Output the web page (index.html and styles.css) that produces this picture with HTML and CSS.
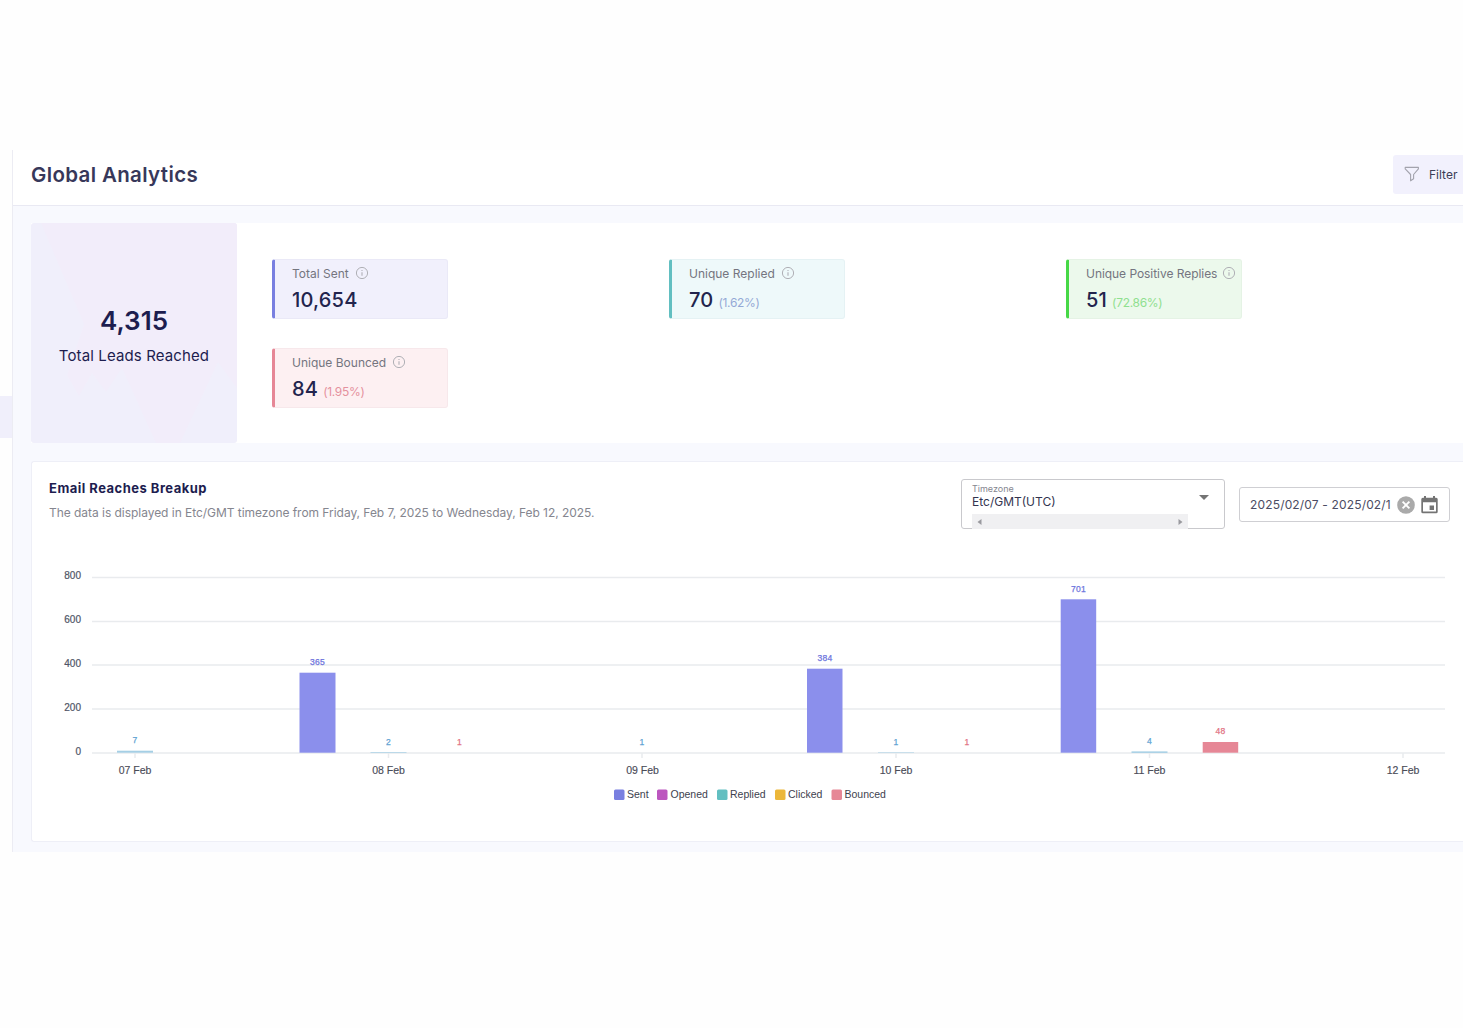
FILE: index.html
```html
<!DOCTYPE html>
<html lang="en">
<head>
  <meta charset="UTF-8">
  <title>Global Analytics</title>
  <link rel="stylesheet" href="styles.css">
</head>
<body>

  <svg class="sprite" width="0" height="0">
    <symbol id="info" viewBox="0 0 14 14">
      <circle cx="7" cy="7" r="5.6" fill="none" stroke="currentColor" stroke-width="1"/>
      <path d="M7 6.3v3.5M7 4v1" fill="none" stroke="currentColor" stroke-width="1.1"/>
    </symbol>
  </svg>

  <div class="app">
    <aside class="sidebar">
      <div class="sidebar-active"></div>
    </aside>

    <main>
      <header>
        <h1>Global Analytics</h1>
        <button type="button" class="filter">
          <svg width="16" height="16" viewBox="0 0 16 16" fill="none" stroke="#a3a3ad" stroke-width="1.1" stroke-linejoin="round">
            <path d="M1.2 1.4h13.2v1.5L9.6 8.5v4.3l-3 2V8.5L1.2 2.9z"/>
          </svg>
          <span>Filter</span>
        </button>
      </header>

      <section class="summary">
        <div class="leads">
          <svg class="leads-bg" viewBox="0 0 206 220" preserveAspectRatio="none">
            <path fill="#f2edfa" d="M10 0H206V165L187 139L149 220H125L91 145L75 169L61 150L48 173L36 152L53 101Z"/>
          </svg>
          <strong>4,315</strong>
          <span>Total Leads Reached</span>
        </div>

        <div class="stats">
          <div class="stat sent">
            <div class="stat-label"><span>Total Sent</span><svg class="info"><use href="#info"/></svg></div>
            <div class="stat-value"><b>10,654</b></div>
          </div>
          <div class="stat replied">
            <div class="stat-label"><span>Unique Replied</span><svg class="info"><use href="#info"/></svg></div>
            <div class="stat-value"><b>70</b><small>(1.62%)</small></div>
          </div>
          <div class="stat positive">
            <div class="stat-label"><span>Unique Positive Replies</span><svg class="info"><use href="#info"/></svg></div>
            <div class="stat-value"><b>51</b><small>(72.86%)</small></div>
          </div>
          <div class="stat bounced">
            <div class="stat-label"><span>Unique Bounced</span><svg class="info"><use href="#info"/></svg></div>
            <div class="stat-value"><b>84</b><small>(1.95%)</small></div>
          </div>
        </div>
      </section>

      <section class="breakup">
        <div class="breakup-head">
          <div class="breakup-title">
            <h2>Email Reaches Breakup</h2>
            <p>The data is displayed in Etc/GMT timezone from Friday, Feb 7, 2025 to Wednesday, Feb 12, 2025.</p>
          </div>

          <div class="timezone">
            <div class="timezone-field">
              <label>Timezone</label>
              <span class="timezone-value">Etc/GMT(UTC)</span>
              <div class="scrollbar">
                <svg width="5" height="6" viewBox="0 0 5 6"><path d="M4.5 0v6L.5 3z"/></svg>
                <svg width="5" height="6" viewBox="0 0 5 6"><path d="M.5 0v6l4-3z"/></svg>
              </div>
            </div>
            <svg class="caret" width="10" height="5" viewBox="0 0 10 5"><path d="M0 0h10L5 5z" fill="#747474"/></svg>
          </div>

          <div class="dates">
            <span class="dates-value">2025/02/07 - 2025/02/12</span>
            <svg width="18" height="18" viewBox="0 0 18 18">
              <circle cx="9" cy="9" r="8.8" fill="#aaaaaa"/>
              <path d="M5.6 5.6l6.8 6.8M12.4 5.6l-6.8 6.8" stroke="#fff" stroke-width="1.9"/>
            </svg>
            <svg width="17" height="18" viewBox="0 0 17 18">
              <path fill="#747474" fill-rule="evenodd" d="M3 0h2v1.8h7V0h2v1.8h1.2a1.5 1.5 0 0 1 1.5 1.5v12.4a1.5 1.5 0 0 1-1.5 1.5H1.8a1.5 1.5 0 0 1-1.5-1.5V3.300a1.500 1.500 0 0 1 1.500-1.500H3zM2 6.200v9.300h13V6.200zM8.600 9.600h4.400v4.400H8.600z"/>
            </svg>
          </div>
        </div>

        <svg class="chart" width="1402" height="250" viewBox="49 560 1402 250">
          <g class="grid">
            <path d="M92 577.500H1445M92 621.500H1445M92 665H1445M92 709H1445M92 753H1445"/>
            <path d="M135 753v5M388.500 753v5M642 753v5M896 753v5M1149.500 753v5M1403 753v5"/>
          </g>
          <g class="y-labels">
            <text x="81" y="579">800</text>
            <text x="81" y="623">600</text>
            <text x="81" y="667">400</text>
            <text x="81" y="711">200</text>
            <text x="81" y="755">0</text>
          </g>
          <g class="x-labels">
            <text x="135" y="774">07 Feb</text>
            <text x="388.500" y="774">08 Feb</text>
            <text x="642.500" y="774">09 Feb</text>
            <text x="896" y="774">10 Feb</text>
            <text x="1149.500" y="774">11 Feb</text>
            <text x="1403" y="774">12 Feb</text>
          </g>
          <g fill="#8b8fec">
            <rect x="299.500" y="672.700" width="36" height="80"/>
            <rect x="807" y="668.700" width="35.500" height="84"/>
            <rect x="1060.700" y="599.300" width="35.500" height="153.400"/>
          </g>
          <g fill="#a5cfe5">
            <rect x="117" y="750.700" width="36" height="2"/>
            <rect x="370.500" y="752.300" width="36" height=".700"/>
            <rect x="878" y="752.300" width="36" height=".500"/>
            <rect x="1131.500" y="751.400" width="36" height="1.500"/>
          </g>
          <rect x="1202.700" y="742" width="35.500" height="10.700" fill="#e68796"/>
          <g class="value v-sent">
            <text x="317.500" y="664.500">365</text>
            <text x="825" y="661">384</text>
            <text x="1078.500" y="591.500">701</text>
          </g>
          <g class="value v-replied">
            <text x="135" y="742.500">7</text>
            <text x="388.500" y="744.500">2</text>
            <text x="642" y="744.500">1</text>
            <text x="896" y="744.500">1</text>
            <text x="1149.500" y="744">4</text>
          </g>
          <g class="value v-bounced">
            <text x="459.500" y="744.500">1</text>
            <text x="967" y="744.500">1</text>
            <text x="1220.500" y="734">48</text>
          </g>
          <g class="legend">
            <rect x="614" y="789.500" width="10.500" height="10.500" rx="1.500" fill="#797fe0"/>
            <text x="627" y="798">Sent</text>
            <rect x="657" y="789.500" width="10.500" height="10.500" rx="1.500" fill="#bc56bf"/>
            <text x="670.500" y="798">Opened</text>
            <rect x="717" y="789.500" width="10.500" height="10.500" rx="1.500" fill="#62bfc1"/>
            <text x="730" y="798">Replied</text>
            <rect x="775" y="789.500" width="10.500" height="10.500" rx="1.500" fill="#ecb73a"/>
            <text x="788" y="798">Clicked</text>
            <rect x="831.500" y="789.500" width="10.500" height="10.500" rx="1.500" fill="#e68796"/>
            <text x="844.500" y="798">Bounced</text>
          </g>
        </svg>
      </section>
    </main>
  </div>

</body>
</html>
```
FILE: styles.css
```css
* {
  box-sizing: border-box;
}

body {
  margin: 0;
  padding-top: 150px;
  background: #fefefe;
  font-family: Inter, "Open Sans", sans-serif;
  color: #22244d;
  overflow: hidden;
}

h1, h2, p {
  margin: 0;
}

.sprite {
  display: block;
}

.app {
  display: flex;
  height: 702px;
}

.sidebar {
  width: 12px;
  flex: none;
  padding-top: 246px;
}

.sidebar-active {
  height: 42px;
  background: #f0effb;
}

main {
  flex: 1;
  min-width: 0;
  border-left: 1px solid #ececf3;
  background: #f8f9fe;
}

header {
  height: 56px;
  display: flex;
  align-items: center;
  justify-content: space-between;
  padding: 0 0 7px 18px;
  background: #fff;
  border-bottom: 1px solid #e9e9f3;
}

h1 {
  font-size: 20.5px;
  font-weight: 600;
  letter-spacing: 0.35px;
  color: #37385a;
}

.filter {
  width: 70px;
  height: 39px;
  display: flex;
  align-items: center;
  gap: 9px;
  padding: 0 0 0 11px;
  border: none;
  border-radius: 3px 0 0 3px;
  background: #f2f1fd;
  font-family: inherit;
  font-size: 12px;
  color: #3c3d56;
}

.filter svg {
  flex: none;
}

.summary {
  height: 220px;
  display: flex;
  margin: 17px 0 0 18px;
  background: #fff;
}

.leads {
  position: relative;
  width: 206px;
  flex: none;
  display: flex;
  flex-direction: column;
  align-items: center;
  padding-top: 81px;
  border-radius: 3px;
  overflow: hidden;
  background: #f0effb;
  color: #1d1d4f;
}

.leads-bg {
  position: absolute;
  inset: 0;
  width: 100%;
  height: 100%;
}

.leads strong,
.leads span {
  position: relative;
}

.leads strong {
  font-size: 26px;
  line-height: 34px;
  font-weight: 600;
}

.leads span {
  margin-top: 8px;
  font-size: 15px;
  line-height: 20px;
  letter-spacing: 0.12px;
}

.stats {
  display: grid;
  grid-template-columns: repeat(3, 176px);
  grid-template-rows: 60px 60px;
  column-gap: 221px;
  row-gap: 29px;
  padding: 36px 0 0 35px;
}

.stat {
  padding: 5px 0 0 17px;
  border: 1px solid;
  border-left-width: 3px;
  border-radius: 3px;
}

.sent {
  background: #f1f0fc;
  border-color: #eae9f7 #eae9f7 #eae9f7 #797fe0;
}

.replied {
  background: #eef9fa;
  border-color: #e5f2f4 #e5f2f4 #e5f2f4 #62bfc1;
}

.positive {
  background: #ecf9ec;
  border-color: #e5f3e5 #e5f3e5 #e5f3e5 #46d846;
}

.bounced {
  background: #fdf0f2;
  border-color: #f7e8eb #f7e8eb #f7e8eb #e68796;
}

.stat-label {
  display: flex;
  align-items: center;
  gap: 6px;
  height: 16px;
  font-size: 12px;
  color: #74757f;
  white-space: nowrap;
}

.positive .stat-label {
  gap: 5px;
  letter-spacing: -0.05px;
}

.info {
  width: 14px;
  height: 14px;
  flex: none;
  color: #b0b0b6;
}

.stat-value {
  display: flex;
  align-items: baseline;
  gap: 5px;
  line-height: 26px;
  margin-top: 6px;
}

.stat-value b {
  font-size: 20px;
  font-weight: 500;
  letter-spacing: 0.2px;
}

.stat-value small {
  font-size: 12px;
  letter-spacing: -0.3px;
}

.replied small {
  color: #94a9d6;
}

.positive small {
  color: #8fe08f;
}

.bounced small {
  color: #e5919e;
}

.breakup {
  height: 381px;
  margin: 18px 0 0 18px;
  padding: 17px 13px 0 17px;
  background: #fff;
  border: 1px solid #eeeff7;
  border-right: none;
  border-radius: 3px 0 0 3px;
}

.breakup-head {
  display: flex;
  height: 50px;
}

.breakup-title {
  flex: 1;
  white-space: nowrap;
}

h2 {
  font-size: 13px;
  line-height: 18px;
  font-weight: 700;
  letter-spacing: 0.48px;
  color: #1d1d4f;
}

.breakup-title p {
  margin-top: 7px;
  font-size: 12px;
  line-height: 18px;
  letter-spacing: -0.04px;
  color: #85868f;
}

.timezone {
  width: 264px;
  height: 50px;
  display: flex;
  justify-content: space-between;
  padding: 0 15px 0 10px;
  border: 1px solid #c9c9cd;
  border-radius: 3px;
}

.timezone-field {
  width: 216px;
  display: flex;
  flex-direction: column;
}

.timezone label {
  margin-top: 3px;
  font-size: 9px;
  line-height: 11px;
  color: #85868f;
}

.timezone-value {
  font-size: 12px;
  line-height: 15px;
  color: #33344f;
}

/* runs over the bottom border of the field */
.scrollbar {
  flex: none;
  height: 15px;
  display: flex;
  align-items: center;
  justify-content: space-between;
  margin-top: 5px;
  padding: 0 5px;
  background: #f0f0f2;
}

.scrollbar path {
  fill: #9a9a9f;
}

.caret {
  margin-top: 15px;
}

.dates {
  width: 211px;
  height: 35px;
  display: flex;
  align-items: center;
  gap: 6px;
  margin: 8px 0 0 14px;
  padding: 0 11px 0 10px;
  border: 1px solid #cfcfd3;
  border-radius: 3px;
}

.dates-value {
  flex: 1;
  overflow: hidden;
  font-size: 12px;
  letter-spacing: 0.16px;
  white-space: nowrap;
  color: #4b4c63;
}

.dates svg {
  flex: none;
}

.chart {
  display: block;
  margin-top: 31px;
  font-family: "Liberation Sans", Arial, sans-serif;
}

.grid path {
  fill: none;
  stroke: #e9ebee;
  stroke-width: 1.5;
}

.y-labels text {
  font-size: 10px;
  text-anchor: end;
  fill: #4f5566;
  stroke: #4f5566;
  stroke-width: 0.2;
}

.x-labels text {
  font-size: 10.5px;
  text-anchor: middle;
  fill: #4a4c58;
  stroke: #4a4c58;
  stroke-width: 0.15;
}

.value text {
  font-size: 8.5px;
  letter-spacing: 0.3px;
  text-anchor: middle;
  stroke-width: 0.25;
}

.v-sent text {
  fill: #6d74dd;
  stroke: #6d74dd;
}

.v-replied text {
  fill: #5fa3d3;
  stroke: #5fa3d3;
}

.v-bounced text {
  fill: #e27384;
  stroke: #e27384;
}

.legend text {
  font-size: 10.5px;
  fill: #40424e;
}
```
